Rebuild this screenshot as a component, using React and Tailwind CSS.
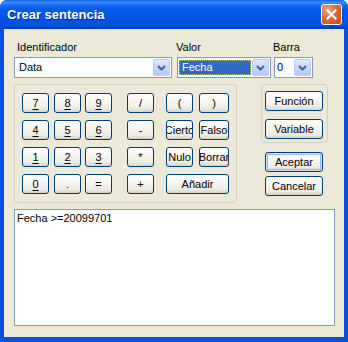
import React from "react";

function Chevron() {
  return (
    <svg width="9" height="6" viewBox="0 0 9 6">
      <path d="M1 1 L4.5 4.5 L8 1" fill="none" stroke="#4d6185" strokeWidth="2" />
    </svg>
  );
}

function ArrowBtn() {
  return (
    <div className="flex h-[17px] w-[17px] items-center justify-center rounded-[2px] border border-[#bccbf1] bg-[linear-gradient(180deg,#dfe8fe_0%,#c6d6fc_50%,#b4c8f8_100%)]">
      <Chevron />
    </div>
  );
}

function Btn({ className = "", children, def = false }) {
  return (
    <div
      className={`flex h-[20px] items-center justify-center overflow-hidden whitespace-nowrap rounded-[3px] border border-[#003c74] bg-[linear-gradient(180deg,#ffffff_0%,#f6f5f0_45%,#ecebe4_80%,#d9d4c6_100%)] text-[11px] leading-none text-black ${def ? "shadow-[inset_0_0_0_1px_#cee7ff,inset_0_0_0_2px_#98b8ea]" : ""} ${className}`}
    >
      {children}
    </div>
  );
}

function Key({ children, u = false, className = "w-[27px]" }) {
  return (
    <Btn className={className}>
      <span className={u ? "underline underline-offset-2" : ""}>{children}</span>
    </Btn>
  );
}

export default function App() {
  return (
    <div className="h-[342px] w-[348px] bg-white font-['Liberation_Sans',Arial,sans-serif]">
      <div className="flex h-[342px] w-[348px] flex-col overflow-hidden rounded-t-[7px] bg-[#0a50de]">
        {/* Title bar */}
        <div className="flex h-[29px] shrink-0 items-center justify-between bg-[linear-gradient(180deg,#0a62e4_0%,#3d8df8_8%,#1f72f2_16%,#0059e9_32%,#0055e5_60%,#0052de_85%,#003cbc_100%)] pl-[7px] pr-[6px]">
          <span className="text-[13px] font-bold text-white [text-shadow:1px_1px_0_#0a2a8a]">
            Crear sentencia
          </span>
          <div className="flex h-[21px] w-[21px] items-center justify-center rounded-[3px] border border-white bg-[radial-gradient(circle_at_30%_25%,#f0a48a_0%,#e0653f_45%,#cc4a1f_100%)]">
            <svg width="11" height="11" viewBox="0 0 11 11">
              <path d="M1.5 1.5 L9.5 9.5 M9.5 1.5 L1.5 9.5" stroke="white" strokeWidth="2.2" strokeLinecap="square" />
            </svg>
          </div>
        </div>
        {/* Client */}
        <div className="mx-[4px] flex h-[308px] flex-col bg-[#ece9d8] pl-[10px] pt-[12px] text-[11px] leading-[13px] text-black">
          <div className="flex">
            <div className="flex w-[158px] flex-col">
              <span className="pl-[3px]">Identificador</span>
              <div className="mt-[3px] flex h-[21px] items-center border border-[#7f9db9] bg-white pl-[4px] pr-[1px]">
                <span className="flex-1">Data</span>
                <ArrowBtn />
              </div>
            </div>
            <div className="ml-[4px] flex w-[95px] flex-col">
              <span>Valor</span>
              <div className="ml-[1px] mt-[3px] flex h-[21px] items-center border border-[#7f9db9] bg-white pl-[1px] pr-[1px]">
                <div className="mr-[1px] flex h-[15px] flex-1 items-center border border-dotted border-[#c9c38a] bg-[#316ac5] pl-[2px] text-white">
                  Fecha
                </div>
                <ArrowBtn />
              </div>
            </div>
            <div className="ml-[2px] flex w-[40px] flex-col">
              <span>Barra</span>
              <div className="ml-[1px] mt-[3px] flex h-[21px] items-center border border-[#7f9db9] bg-white pl-[2px] pr-[1px]">
                <span className="flex-1">0</span>
                <ArrowBtn />
              </div>
            </div>
          </div>

          <div className="mt-[6px] flex">
            {/* Left group */}
            <div className="flex h-[119px] w-[223px] flex-col gap-[7px] rounded-[4px] border border-[#d0d0bf] pl-[7px] pt-[8px]">
              <div className="flex">
                <Key u>7</Key>
                <div className="ml-[5px]"><Key u>8</Key></div>
                <div className="ml-[4px]"><Key u>9</Key></div>
                <div className="ml-[15px]"><Key>/</Key></div>
                <div className="ml-[12px]"><Key>(</Key></div>
                <div className="ml-[6px]"><Key className="w-[30px]">)</Key></div>
              </div>
              <div className="flex">
                <Key u>4</Key>
                <div className="ml-[5px]"><Key u>5</Key></div>
                <div className="ml-[4px]"><Key u>6</Key></div>
                <div className="ml-[15px]"><Key>-</Key></div>
                <div className="ml-[12px]"><Key>Cierto</Key></div>
                <div className="ml-[6px]"><Key className="w-[30px]">Falso</Key></div>
              </div>
              <div className="flex">
                <Key u>1</Key>
                <div className="ml-[5px]"><Key u>2</Key></div>
                <div className="ml-[4px]"><Key u>3</Key></div>
                <div className="ml-[15px]"><Key>*</Key></div>
                <div className="ml-[12px]"><Key>Nulo</Key></div>
                <div className="ml-[6px]"><Key className="w-[30px]">Borrar</Key></div>
              </div>
              <div className="flex">
                <Key u>0</Key>
                <div className="ml-[5px]"><Key>.</Key></div>
                <div className="ml-[4px]"><Key>=</Key></div>
                <div className="ml-[15px]"><Key>+</Key></div>
                <div className="ml-[12px]"><Key className="w-[63px]">Añadir</Key></div>
              </div>
            </div>
            {/* Right column */}
            <div className="ml-[24px] flex flex-col">
              <div className="flex h-[59px] w-[67px] flex-col gap-[8px] rounded-[4px] border border-[#d0d0bf] pl-[3px] pt-[6px]">
                <Btn className="w-[58px]">Función</Btn>
                <Btn className="w-[58px]">Variable</Btn>
              </div>
              <div className="ml-[4px] mt-[9px] flex flex-col gap-[4px]">
                <Btn className="w-[58px]" def>Aceptar</Btn>
                <Btn className="w-[58px]">Cancelar</Btn>
              </div>
            </div>
          </div>

          <div className="mt-[6px] h-[117px] w-[321px] border border-[#7f9db9] bg-white pl-[2px] pt-[2px]">
            Fecha &gt;=20099701
          </div>
        </div>
      </div>
    </div>
  );
}
